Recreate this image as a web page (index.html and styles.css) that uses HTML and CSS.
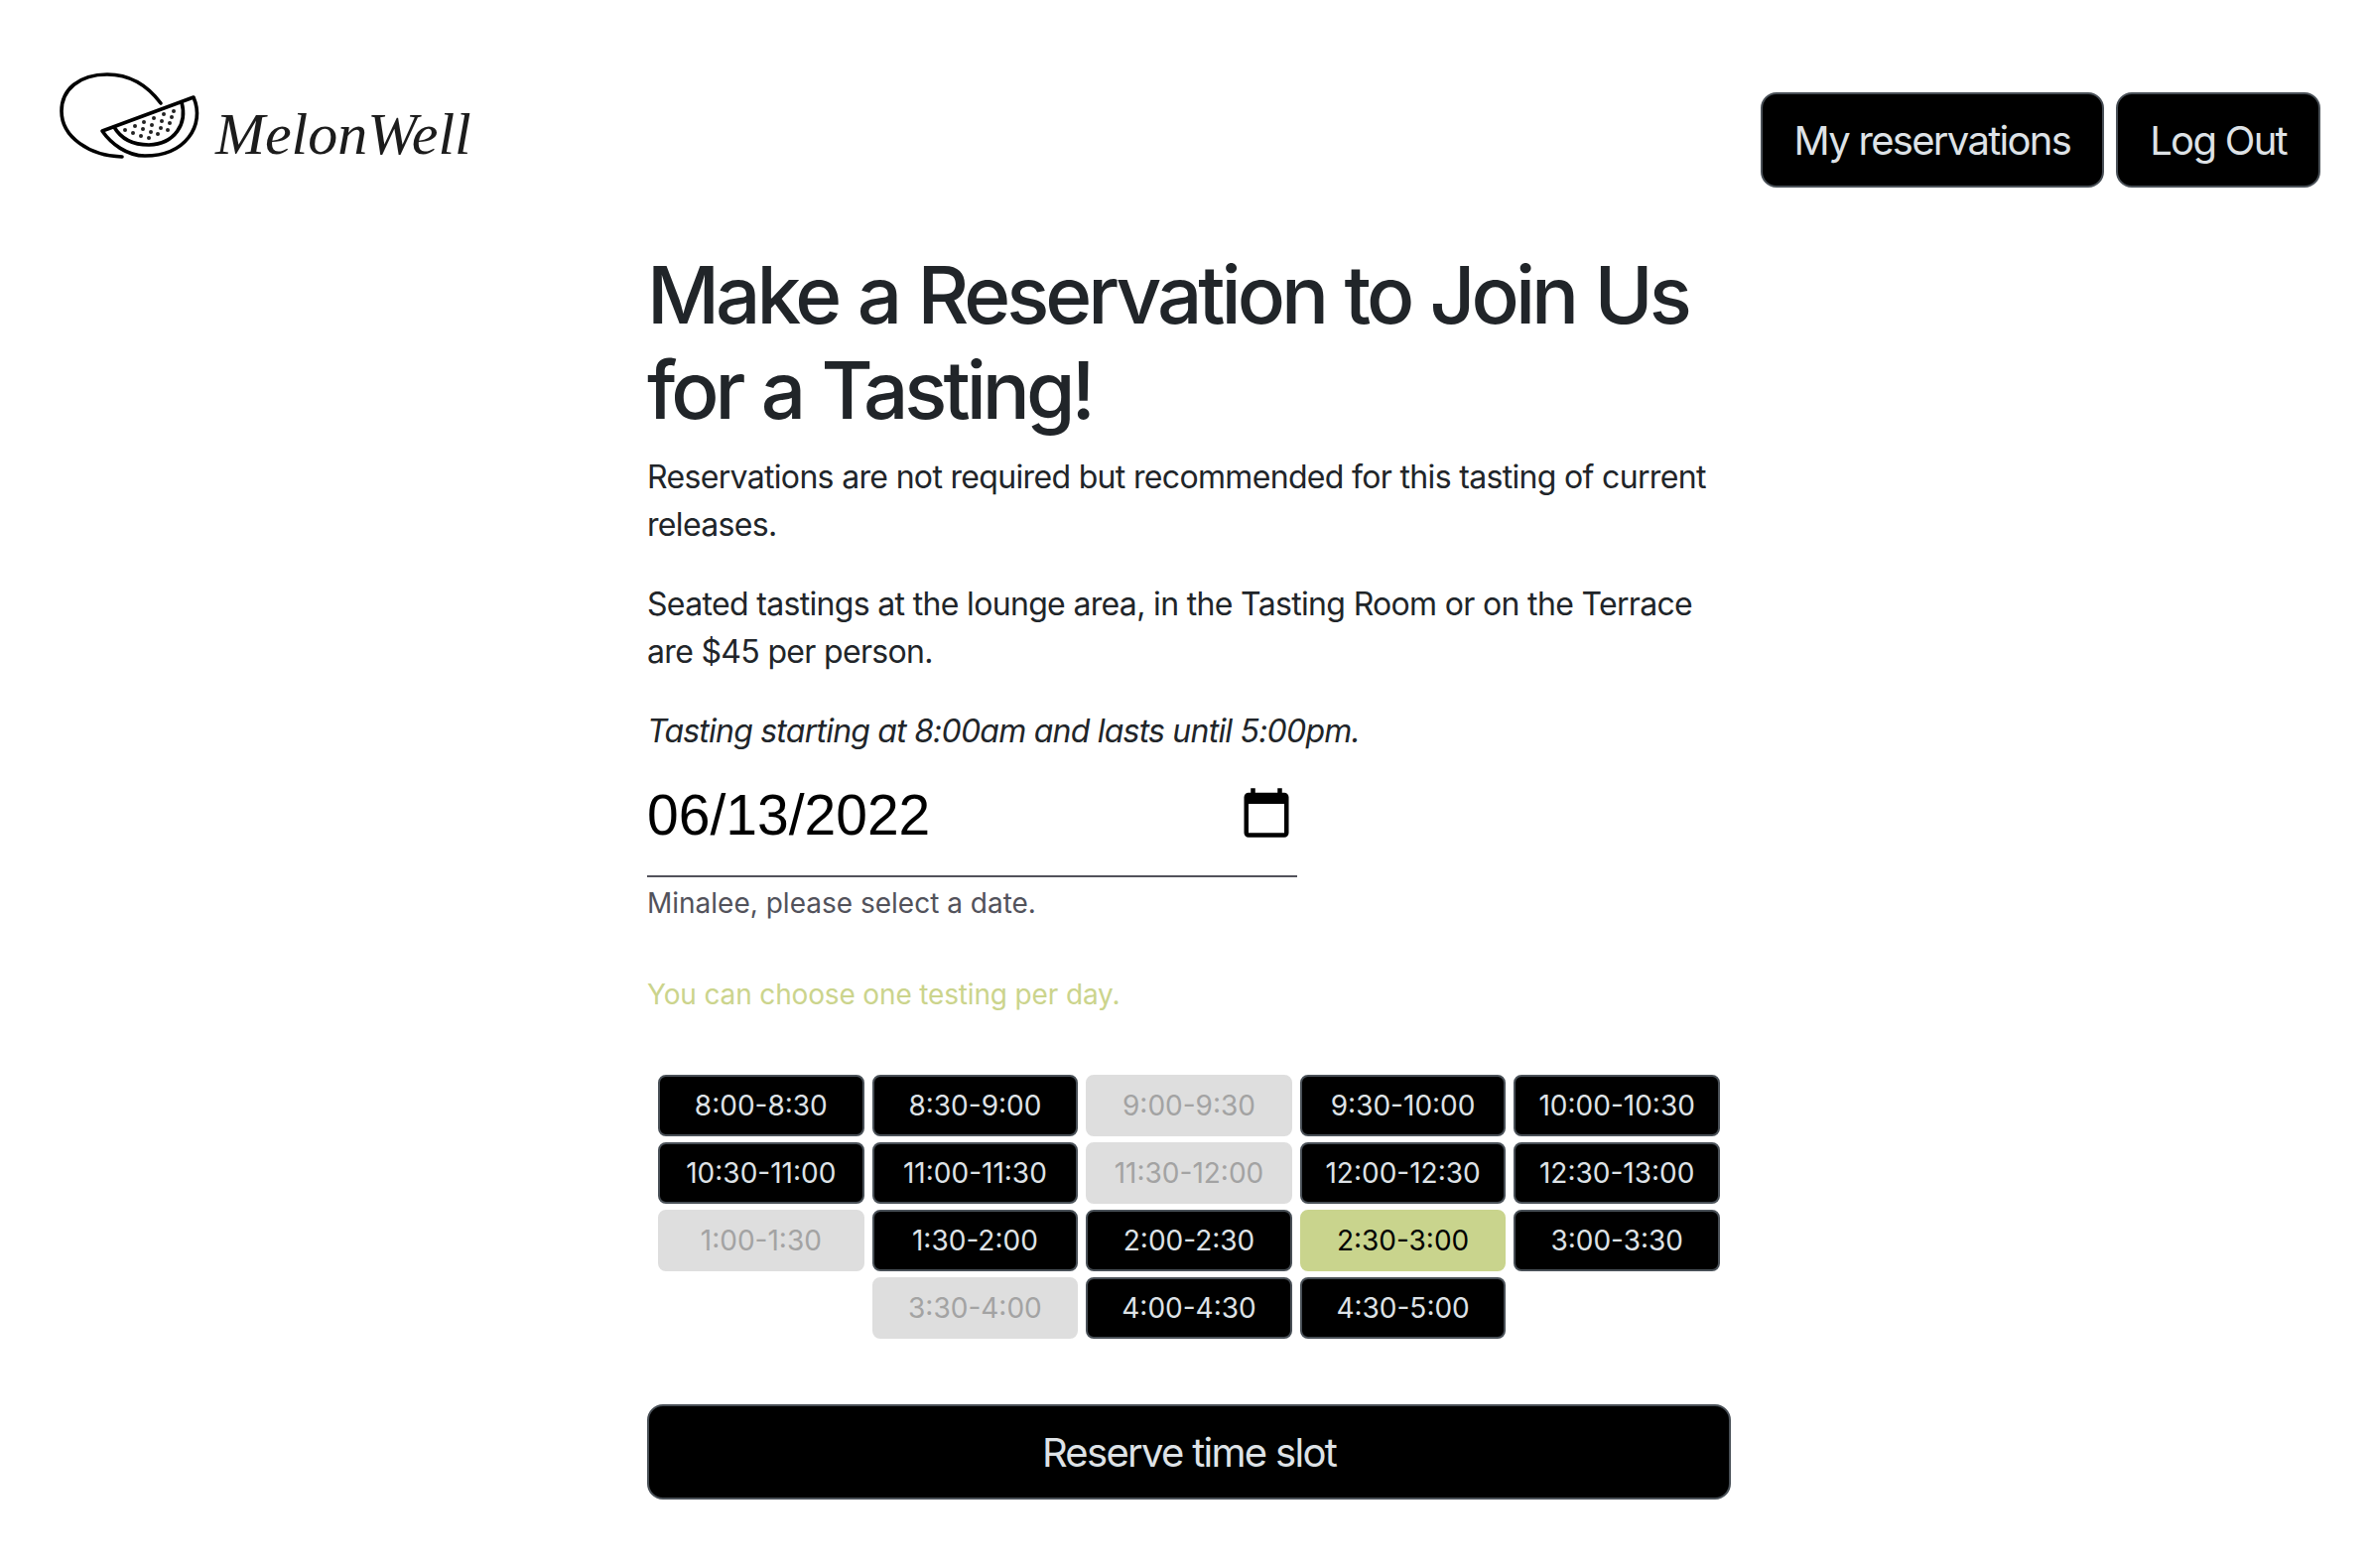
FILE: index.html
```html
<!DOCTYPE html>
<html lang="en">
<head>
<meta charset="utf-8">
<title>MelonWell</title>
<link rel="stylesheet" href="styles.css">
</head>
<body>
<header class="top">
  <svg class="logo" viewBox="0 0 430 110" width="430" height="110" role="img" aria-label="MelonWell">
    <g class="logo-lines">
      <path d="M112 44C97 24 78 15 58 15C30 15 12 30 12 52C12 78 40 97 73 98"/>
      <path d="M53 72L145 38C157 66 137 97 96 97C78 97 62 85 53 72Z"/>
      <path d="M65 68C72 80 85 86 100 86C126 85 139 65 133 43"/>
    </g>
    <g class="logo-dots">
      <circle cx="125" cy="52" r="2"/><circle cx="115" cy="55" r="2"/><circle cx="105" cy="59" r="2"/><circle cx="95" cy="63" r="2"/><circle cx="86" cy="67" r="2"/><circle cx="76" cy="71" r="2"/>
      <circle cx="123" cy="58" r="2"/><circle cx="113" cy="62" r="2"/><circle cx="103" cy="66" r="2"/><circle cx="94" cy="70" r="2"/><circle cx="84" cy="74" r="2"/>
      <circle cx="121" cy="64" r="2"/><circle cx="112" cy="69" r="2"/><circle cx="102" cy="73" r="2"/><circle cx="92" cy="77" r="2"/>
      <circle cx="119" cy="71" r="2"/><circle cx="109" cy="75" r="2"/><circle cx="100" cy="79" r="2"/>
    </g>
    <text class="logo-word" x="167" y="95">MelonWell</text>
  </svg>
  <nav class="nav">
    <a class="btn btn-lg">My reservations</a>
    <a class="btn btn-lg">Log Out</a>
  </nav>
</header>
<main class="main">
  <h1 class="title">Make a Reservation to Join Us for a Tasting!</h1>
  <p class="copy">Reservations are not required but recommended for this tasting of current releases.</p>
  <p class="copy">Seated tastings at the lounge area, in the Tasting Room or on the Terrace are $45 per person.</p>
  <p class="copy"><em class="note">Tasting starting at 8:00am and lasts until 5:00pm.</em></p>
  <div class="date-field">
    <span class="date-value">06/13/2022</span>
    <svg class="date-icon" viewBox="0 0 24 24" width="54" height="54"><path d="M20 3h-1V1h-2v2H7V1H5v2H4c-1.1 0-2 .9-2 2v16c0 1.1.9 2 2 2h16c1.1 0 2-.9 2-2V5c0-1.1-.9-2-2-2zm0 18H4V8h16v13z"/></svg>
  </div>
  <p class="helper">Minalee, please select a date.</p>
  <p class="hint">You can choose one testing per day.</p>
  <div class="slots">
    <button class="slot">8:00-8:30</button>
    <button class="slot">8:30-9:00</button>
    <button class="slot off">9:00-9:30</button>
    <button class="slot">9:30-10:00</button>
    <button class="slot">10:00-10:30</button>
    <button class="slot">10:30-11:00</button>
    <button class="slot">11:00-11:30</button>
    <button class="slot off">11:30-12:00</button>
    <button class="slot">12:00-12:30</button>
    <button class="slot">12:30-13:00</button>
    <button class="slot off">1:00-1:30</button>
    <button class="slot">1:30-2:00</button>
    <button class="slot">2:00-2:30</button>
    <button class="slot picked">2:30-3:00</button>
    <button class="slot">3:00-3:30</button>
    <button class="slot off">3:30-4:00</button>
    <button class="slot">4:00-4:30</button>
    <button class="slot">4:30-5:00</button>
  </div>
  <button class="btn btn-lg reserve">Reserve time slot</button>
</main>
</body>
</html>
```
FILE: styles.css
```css
* { box-sizing: border-box; }
html, body { margin: 0; background: #fff; }
body {
  font-family: Inter, "Liberation Sans", sans-serif;
  font-size: 32px;
  line-height: 48px;
  color: #212529;
  height: 1580px;
  overflow: hidden;
}
.top {
  display: flex;
  justify-content: space-between;
  align-items: flex-start;
  padding: 60px 54px 0 50px;
  height: 249px;
}
.logo { display: block; }
.logo-lines { fill: none; stroke: #000; stroke-width: 3.6; stroke-linecap: round; stroke-linejoin: round; }
.logo-dots { fill: #222; }
.logo-word { font-family: "Liberation Serif", serif; font-style: italic; font-size: 60px; fill: #1c1c1c; }
.nav { display: flex; gap: 12px; padding-top: 33px; }
.btn {
  display: block;
  font-family: inherit;
  background: #000;
  color: #dee2e6;
  border: 2px solid #495057;
}
.btn-lg {
  font-size: 40px;
  line-height: 60px;
  padding: 17px 32px 15px;
  border-radius: 16px;
  letter-spacing: -1.7px;
}
.main {
  width: 1092px;
  margin-left: 652px;
}
.title {
  margin: 0 0 16px;
  font-size: 80px;
  line-height: 96px;
  font-weight: 500;
  letter-spacing: -4px;
  word-spacing: 2px;
}
.copy { margin: 0 0 32px; letter-spacing: -0.67px; }
.note { letter-spacing: -0.78px; }
.date-field {
  width: 655px;
  height: 107px;
  margin-top: -16px;
  border-bottom: 2px solid #52525b;
  display: flex;
  justify-content: space-between;
  align-items: flex-start;
  padding: 14px 0 0 0;
}
.date-value {
  font-family: "Liberation Sans", Arial, sans-serif;
  font-size: 57px;
  line-height: 60px;
  color: #000;
}
.date-icon { margin: 1px 4px 0 0; }
.helper { margin: 5px 0 0; font-size: 28px; line-height: 42px; color: #52525b; }
.hint { margin: 50px 0 0; font-size: 28px; line-height: 42px; color: #cbd48c; letter-spacing: -0.15px; }
.slots {
  display: flex;
  flex-wrap: wrap;
  justify-content: center;
  gap: 6px 8px;
  padding: 0 10px;
  margin-top: 60px;
}
.slot {
  width: 207.6px;
  height: 62px;
  padding: 0;
  font-family: inherit;
  font-size: 28px;
  line-height: 42px;
  background: #000;
  color: #dee2e6;
  border: 2px solid #495057;
  border-radius: 8px;
}
.slot.off { background: #dedede; color: #a3a3a3; border-color: #dedede; }
.slot.picked { background: #c9d48d; color: #000; border-color: #c9d48d; }
.reserve { width: 100%; margin-top: 66px; }
```
